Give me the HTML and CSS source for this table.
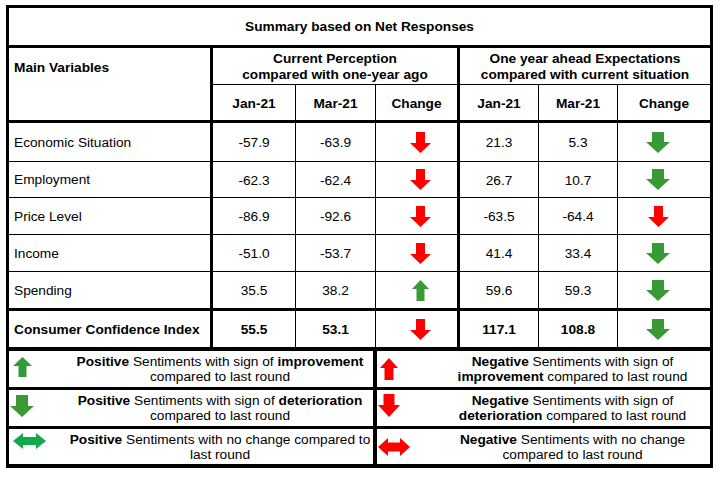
FILE: index.html
```html
<!DOCTYPE html>
<html>
<head>
<meta charset="utf-8">
<link rel="stylesheet" href="styles.css">
</head>
<body>
<div class="sheet">
  <div class="grid">
    <div class="c title">Summary based on Net Responses</div>
    <div class="c mainvar">Main Variables</div>
    <div class="c group cur">Current Perception<br>compared with one-year ago</div>
    <div class="c group exp">One year ahead Expectations<br>compared with current situation</div>
    <div class="c hd thin">Jan-21</div>
    <div class="c hd thin">Mar-21</div>
    <div class="c hd thick">Change</div>
    <div class="c hd thin">Jan-21</div>
    <div class="c hd thin">Mar-21</div>
    <div class="c hd last">Change</div>

    <div class="c lbl">Economic Situation</div>
    <div class="c num thin">-57.9</div>
    <div class="c num thin">-63.9</div>
    <div class="c chg1 thick"><svg class="a-rd" viewBox="0 0 21 21"><polygon points="6,0 15,0 15,11 21,11 10.5,21 0,11 6,11"/></svg></div>
    <div class="c num thin">21.3</div>
    <div class="c num thin">5.3</div>
    <div class="c chg2 last"><svg class="a-gd" viewBox="0 0 24 21"><polygon points="6,0 18,0 18,10 24,10 12,21 0,10 6,10"/></svg></div>

    <div class="c lbl">Employment</div>
    <div class="c num thin">-62.3</div>
    <div class="c num thin">-62.4</div>
    <div class="c chg1 thick"><svg class="a-rd" viewBox="0 0 21 21"><polygon points="6,0 15,0 15,11 21,11 10.5,21 0,11 6,11"/></svg></div>
    <div class="c num thin">26.7</div>
    <div class="c num thin">10.7</div>
    <div class="c chg2 last"><svg class="a-gd" viewBox="0 0 24 21"><polygon points="6,0 18,0 18,10 24,10 12,21 0,10 6,10"/></svg></div>

    <div class="c lbl">Price Level</div>
    <div class="c num thin">-86.9</div>
    <div class="c num thin">-92.6</div>
    <div class="c chg1 thick"><svg class="a-rd" viewBox="0 0 21 21"><polygon points="6,0 15,0 15,11 21,11 10.5,21 0,11 6,11"/></svg></div>
    <div class="c num thin">-63.5</div>
    <div class="c num thin">-64.4</div>
    <div class="c chg2 last"><svg class="a-rd" viewBox="0 0 21 21"><polygon points="6,0 15,0 15,11 21,11 10.5,21 0,11 6,11"/></svg></div>

    <div class="c lbl">Income</div>
    <div class="c num thin">-51.0</div>
    <div class="c num thin">-53.7</div>
    <div class="c chg1 thick"><svg class="a-rd" viewBox="0 0 21 21"><polygon points="6,0 15,0 15,11 21,11 10.5,21 0,11 6,11"/></svg></div>
    <div class="c num thin">41.4</div>
    <div class="c num thin">33.4</div>
    <div class="c chg2 last"><svg class="a-gd" viewBox="0 0 24 21"><polygon points="6,0 18,0 18,10 24,10 12,21 0,10 6,10"/></svg></div>

    <div class="c lbl sep">Spending</div>
    <div class="c num thin sep">35.5</div>
    <div class="c num thin sep">38.2</div>
    <div class="c chg1 thick sep"><svg class="a-gu" viewBox="0 0 17 21"><polygon points="8.5,0 17,9 12.5,9 12.5,21 4.5,21 4.5,9 0,9"/></svg></div>
    <div class="c num thin sep">59.6</div>
    <div class="c num thin sep">59.3</div>
    <div class="c chg2 last sep"><svg class="a-gd" viewBox="0 0 24 21"><polygon points="6,0 18,0 18,10 24,10 12,21 0,10 6,10"/></svg></div>

    <div class="c lbl b end">Consumer Confidence Index</div>
    <div class="c num thin b end">55.5</div>
    <div class="c num thin b end">53.1</div>
    <div class="c chg1 thick end"><svg class="a-rd" viewBox="0 0 21 21"><polygon points="6,0 15,0 15,11 21,11 10.5,21 0,11 6,11"/></svg></div>
    <div class="c num thin b end">117.1</div>
    <div class="c num thin b end">108.8</div>
    <div class="c chg2 last end"><svg class="a-gd" viewBox="0 0 24 21"><polygon points="6,0 18,0 18,10 24,10 12,21 0,10 6,10"/></svg></div>
  </div>

  <div class="legend">
    <div class="lg left">
      <div class="ico"><svg class="l-gu" viewBox="0 0 19 20"><polygon points="9.5,0 19,9 13.5,9 13.5,20 5.5,20 5.5,9 0,9"/></svg></div>
      <div class="txt"><b>Positive</b> Sentiments with sign of <b>improvement</b><br>compared to last round</div>
    </div>
    <div class="lg right">
      <div class="ico"><svg class="l-ru" viewBox="0 0 18 22"><polygon points="9,0 18,10 13.5,10 13.5,22 4.5,22 4.5,10 0,10"/></svg></div>
      <div class="txt"><b>Negative</b> Sentiments with sign of<br><b>improvement</b> compared to last round</div>
    </div>
    <div class="lg left">
      <div class="ico"><svg class="l-gd" viewBox="0 0 24 22"><polygon points="6,0 18,0 18,11 24,11 12,22 0,11 6,11"/></svg></div>
      <div class="txt"><b>Positive</b> Sentiments with sign of <b>deterioration</b><br>compared to last round</div>
    </div>
    <div class="lg right">
      <div class="ico"><svg class="l-rd" viewBox="0 0 22 23"><polygon points="5.5,0 16.5,0 16.5,11 22,11 11,23 0,11 5.5,11"/></svg></div>
      <div class="txt"><b>Negative</b> Sentiments with sign of<br><b>deterioration</b> compared to last round</div>
    </div>
    <div class="lg left lastrow">
      <div class="ico"><svg class="l-glr" viewBox="0 0 33 16"><polygon points="0,8 10,0 10,4 23,4 23,0 33,8 23,16 23,12 10,12 10,16"/></svg></div>
      <div class="txt"><b>Positive</b> Sentiments with no change compared to<br>last round</div>
    </div>
    <div class="lg right lastrow">
      <div class="ico"><svg class="l-rlr" viewBox="0 0 32 18"><polygon points="0,9 10,0 10,4.5 22,4.5 22,0 32,9 22,18 22,13.5 10,13.5 10,18"/></svg></div>
      <div class="txt"><b>Negative</b> Sentiments with no change<br>compared to last round</div>
    </div>
  </div>
</div>
</body>
</html>
```

FILE: styles.css
```css
* { box-sizing: border-box; }
html, body { margin: 0; background: #ffffff; }
body {
  padding: 5px 0 0 6px;
  font-family: "Liberation Sans", Arial, sans-serif;
  font-size: 13.7px;
  color: #000;
}
.sheet {
  width: 707px;
  border: 3px solid #000;
  border-bottom-width: 4px;
  background: #fff;
}
.grid {
  display: grid;
  grid-template-columns: 204px 83px 80px 84px 79px 79px 92px;
  grid-template-rows: 40px 37px 38px 39px 36px 37px 37px 39px 40px;
}
.c {
  display: flex;
  align-items: center;
  justify-content: center;
  border-bottom: 1px solid #000;
  line-height: 15px;
}
.title {
  grid-column: 1 / 8;
  border-bottom: 3px solid #000;
  font-weight: bold;
}
.mainvar {
  grid-row: 2 / 4;
  justify-content: flex-start;
  align-items: flex-start;
  padding: 12px 0 0 5px;
  font-weight: bold;
  border-right: 3px solid #000;
  border-bottom: 3px solid #000;
}
.group {
  font-weight: bold;
  text-align: center;
  line-height: 15.5px;
  padding-top: 1px;
}
.cur { grid-column: 2 / 5; border-right: 3px solid #000; }
.exp { grid-column: 5 / 8; }
.hd {
  font-weight: bold;
  border-bottom: 3px solid #000;
  padding-top: 2px;
}
.thin { border-right: 1px solid #000; }
.thick { border-right: 3px solid #000; }
.lbl {
  justify-content: flex-start;
  padding-left: 5px;
  border-right: 3px solid #000;
}
.num { padding-top: 1px; }
.b { font-weight: bold; }
.sep { border-bottom-width: 3px; }
.end { border-bottom: 4px solid #000; padding-top: 0; }
.chg1 { padding-left: 7px; }
.chg2 { padding-right: 12px; }

svg { display: block; }
.a-rd { width: 21px; height: 21px; fill: #ff0000; }
.a-gd { width: 24px; height: 21px; fill: #389a34; }
.a-gu { width: 17px; height: 21px; fill: #389a34; }

.legend {
  display: grid;
  grid-template-columns: 368px 333px;
  grid-template-rows: 39px 39px 35px;
}
.lg {
  display: flex;
  align-items: center;
  border-bottom: 3px solid #000;
}
.lg.lastrow { border-bottom: none; }
.lg.left { border-right: 4px solid #000; }
.ico {
  width: 58px;
  flex: none;
  display: flex;
  align-items: center;
}
.txt {
  flex: 1;
  text-align: center;
  line-height: 15px;
}
.l-gu { width: 19px; height: 20px; fill: #2f9a3a; margin-left: 4px; margin-top: -4px; }
.l-gd { width: 24px; height: 22px; fill: #3c9a34; margin-left: 1px; margin-top: -4px; }
.l-glr { width: 33px; height: 16px; fill: #14a84b; margin-left: 4px; margin-top: -12px; }
.l-ru { width: 18px; height: 22px; fill: #ff0000; margin-left: 3px; }
.l-rd { width: 22px; height: 23px; fill: #ff0000; margin-left: 1px; margin-top: -5px; }
.l-rlr { width: 32px; height: 18px; fill: #ff0000; margin-left: 1px; margin-top: 1px; }
```
